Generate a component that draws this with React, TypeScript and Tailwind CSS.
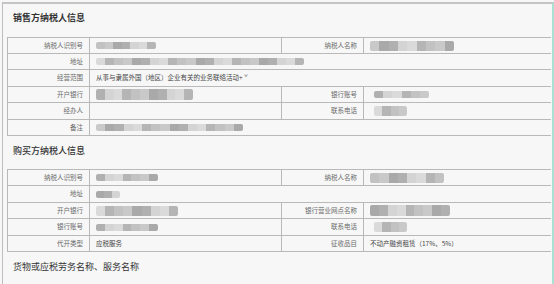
import type { ReactNode } from "react";

// masked values are drawn as soft grey strips
const shades = ["#c9c9c9", "#b5b5b5", "#d4d4d4", "#a9a9a9", "#c2c2c2", "#dadada", "#b0b0b0"];

function Masked({ w, h = 7, tall = false }: { w: number; h?: number; tall?: boolean }) {
  const n = Math.max(2, Math.round(w / 9));
  return (
    <div
      className="flex overflow-hidden rounded-[2px] blur-[0.7px]"
      style={{ width: w, height: tall ? h + 3 : h }}
    >
      {Array.from({ length: n }).map((_, i) => (
        <div key={i} className="flex-1" style={{ background: shades[(i * 3 + w) % shades.length] }} />
      ))}
    </div>
  );
}

function Label({ children, h }: { children: ReactNode; h: string }) {
  return (
    <div
      className={`${h} flex items-center justify-end pr-[6px] border-r border-b border-[#b9b9b9] text-[6.5px] text-[#6a6a6a]`}
    >
      {children}
    </div>
  );
}

function Value({ children, h, span = false, last = false }: { children?: ReactNode; h: string; span?: boolean; last?: boolean }) {
  return (
    <div
      className={`${h} flex items-center pl-[6px] border-b border-[#b9b9b9] text-[6.5px] text-[#444] ${
        span ? "col-span-3" : ""
      } ${last || span ? "" : "border-r"}`}
    >
      {children}
    </div>
  );
}

export default function App() {
  return (
    <div className="w-[554px] h-[284px] bg-[#f7f7f7] overflow-hidden pt-[2px] pl-[2px] font-['Noto_Sans_CJK_SC',sans-serif]">
      <div className="h-full border-t-2 border-l border-r-2 border-t-[#c4c4c4] border-l-[#bdbdbd] border-r-[#a9e2d2]">
        {/* 销售方 */}
        <div className="h-[33px] pl-[10px] pt-[8px] text-[9px] leading-[12px] font-bold text-[#333]">销售方纳税人信息</div>
        <div className="ml-[4px] mr-[1px] border-t border-l border-[#b9b9b9] grid grid-cols-[82px_192px_82px_1fr]">
          <Label h="h-[16px]">纳税人识别号</Label>
          <Value h="h-[16px]"><Masked w={60} /></Value>
          <Label h="h-[16px]">纳税人名称</Label>
          <Value h="h-[16px]" last><Masked w={84} tall /></Value>

          <Label h="h-[16px]">地址</Label>
          <Value h="h-[16px]" span><Masked w={208} /></Value>

          <Label h="h-[17px]">经营范围</Label>
          <Value h="h-[17px]" span>从事与隶属外国（地区）企业有关的业务联络活动+ ˇ</Value>

          <Label h="h-[16px]">开户银行</Label>
          <Value h="h-[16px]"><Masked w={97} h={8} tall /></Value>
          <Label h="h-[16px]">银行账号</Label>
          <Value h="h-[16px]" last><div className="pl-[4px]"><Masked w={55} /></div></Value>

          <Label h="h-[17px]">经办人</Label>
          <Value h="h-[17px]" />
          <Label h="h-[17px]">联系电话</Label>
          <Value h="h-[17px]" last><div className="pl-[4px]"><Masked w={33} tall /></div></Value>

          <Label h="h-[16px]">备注</Label>
          <Value h="h-[16px]" span><Masked w={147} /></Value>
        </div>

        {/* 购买方 */}
        <div className="h-[33px] pl-[10px] pt-[9px] text-[9px] leading-[12px] font-medium text-[#333]">购买方纳税人信息</div>
        <div className="ml-[4px] mr-[1px] border-t border-l border-[#b9b9b9] grid grid-cols-[82px_192px_82px_1fr]">
          <Label h="h-[16px]">纳税人识别号</Label>
          <Value h="h-[16px]"><Masked w={62} /></Value>
          <Label h="h-[16px]">纳税人名称</Label>
          <Value h="h-[16px]" last><Masked w={74} tall /></Value>

          <Label h="h-[17px]">地址</Label>
          <Value h="h-[17px]" span><Masked w={24} /></Value>

          <Label h="h-[16px]">开户银行</Label>
          <Value h="h-[16px]"><Masked w={82} tall /></Value>
          <Label h="h-[16px]">银行营业网点名称</Label>
          <Value h="h-[16px]" last><Masked w={80} h={8} tall /></Value>

          <Label h="h-[17px]">银行账号</Label>
          <Value h="h-[17px]"><Masked w={62} /></Value>
          <Label h="h-[17px]">联系电话</Label>
          <Value h="h-[17px]" last><div className="pl-[4px]"><Masked w={33} tall /></div></Value>

          <Label h="h-[16px]">代开类型</Label>
          <Value h="h-[16px]">应税服务</Value>
          <Label h="h-[16px]">征收品目</Label>
          <Value h="h-[16px]" last>不动产融资租赁（17%、5%）</Value>
        </div>

        {/* 货物 */}
        <div className="h-[33px] pl-[10px] pt-[9px] text-[9px] leading-[12px] font-normal text-[#333]">货物或应税劳务名称、服务名称</div>
      </div>
    </div>
  );
}
